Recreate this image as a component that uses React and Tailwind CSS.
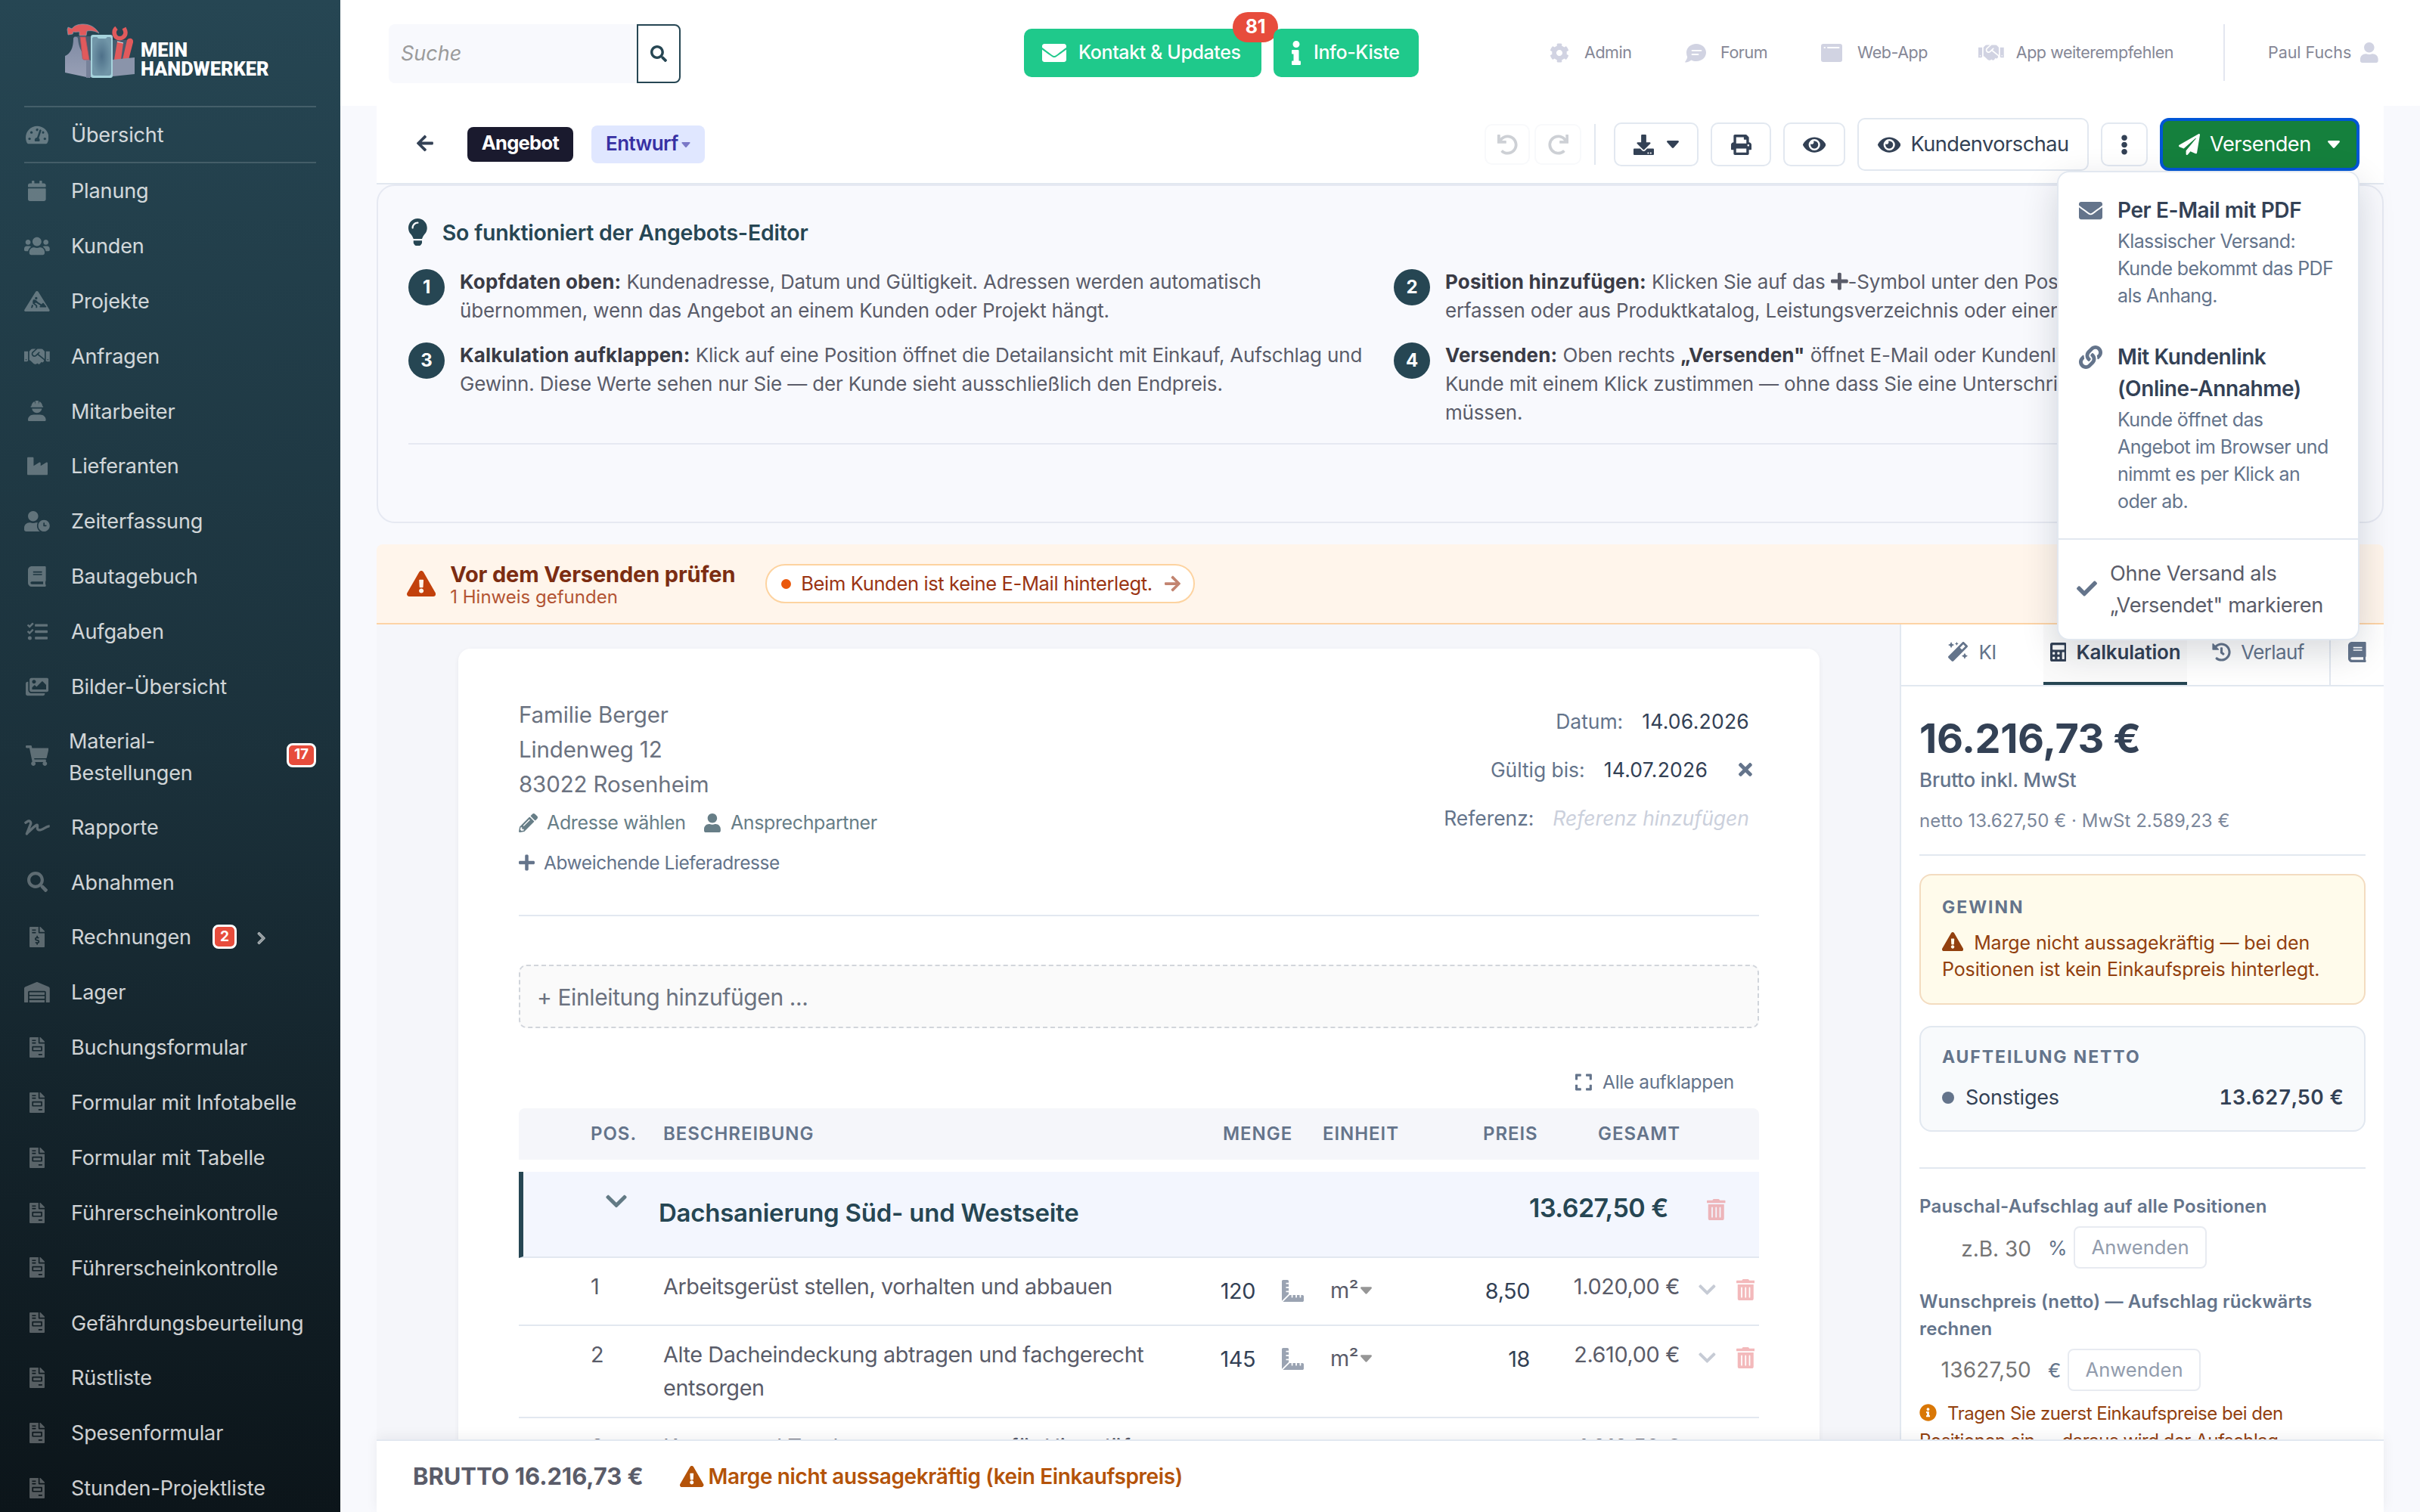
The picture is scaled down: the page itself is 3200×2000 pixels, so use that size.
import { IconContext } from "react-icons";
import {
  FaArrowLeft,
  FaArrowRight,
  FaBook,
  FaCalculator,
  FaCalendar,
  FaCheck,
  FaChevronDown,
  FaChevronRight,
  FaCog,
  FaDownload,
  FaEllipsisV,
  FaEnvelope,
  FaExclamationTriangle,
  FaExpand,
  FaEye,
  FaFileInvoice,
  FaFileInvoiceDollar,
  FaHandshake,
  FaHistory,
  FaImages,
  FaIndustry,
  FaInfo,
  FaInfoCircle,
  FaLightbulb,
  FaLink,
  FaMagic,
  FaPaperPlane,
  FaPencilAlt,
  FaPlus,
  FaPrint,
  FaRedo,
  FaRulerCombined,
  FaSearch,
  FaShoppingCart,
  FaSignature,
  FaTachometerAlt,
  FaTasks,
  FaTimes,
  FaTrashAlt,
  FaUndo,
  FaUser,
  FaUserClock,
  FaUsers,
  FaWarehouse,
} from "react-icons/fa";

// "auto" keeps each glyph's own aspect ratio, so only the height is set per icon
const iconDefaults = { size: "auto" };

/* ---------- Icons missing in Font Awesome free ---------- */

const WorkSignIcon = ({ className }) => (
  <svg viewBox="0 0 640 512" fill="currentColor" className={className}>
    <path
      fillRule="evenodd"
      d="M320 0c14 0 27 7 34 19l280 448c12 20-2 45-26 45H32c-24 0-38-25-26-45L286 19c7-12 20-19 34-19zM300 148a32 32 0 1 0 0 64 32 32 0 1 0 0-64zM214 246l24-38 60 18 52 54 82 52 30-28c8-8 20-8 26 0l66 84c6 8 0 20-10 20H400c-12 0-18-14-10-22l20-22-110-68-42 6 68 56v66h-34v-50l-78-60zm-20 90 34 26-24 62h-34z"
    />
  </svg>
);

const HelmetUserIcon = ({ className }) => (
  <svg viewBox="0 0 448 512" fill="currentColor" className={className}>
    <path d="M184 8c0-5 4-8 8-8h64c4 0 8 3 8 8v84l22-72c43 22 74 66 78 116h4c9 0 16 7 16 16s-7 16-16 16H80c-9 0-16-7-16-16s7-16 16-16h4c4-50 35-94 78-116l22 72zM100 200h248c-8 62-60 108-124 108S108 262 100 200zM0 482c0-78 64-130 142-130h164c78 0 142 52 142 130 0 17-13 30-30 30H30c-17 0-30-13-30-30z" />
  </svg>
);

const ForumIcon = ({ className }) => (
  <svg viewBox="0 0 28 26" className={className}>
    <path
      fill="currentColor"
      d="M15 1c7.200 0 13 5 13 11.500S22.200 24 15 24c-2.400 0-4.600-.5-6.500-1.500C6.500 24 4 25.500.8 25.500c-.6 0-.8-.7-.4-1.100C1.800 22.800 2.900 20.600 3.200 18.600 2.400 16.800 2 14.700 2 12.500 2 6 7.800 1 15 1z"
    />
    <path stroke="#fff" strokeWidth="1.800" strokeLinecap="round" d="M9.500 9.800h12M9.500 15h8" />
  </svg>
);

const WindowIcon = ({ className }) => (
  <svg viewBox="0 0 28 24" className={className}>
    <rect width="28" height="24" rx="3" fill="currentColor" />
    <path stroke="#fff" strokeWidth="2" strokeLinecap="round" d="M4.500 5h.5M9 5h14.500" />
  </svg>
);

const Caret = ({ className }) => (
  <svg viewBox="0 0 16 10" fill="currentColor" className={className}>
    <path d="M1.500 0h13c1.300 0 1.900 1.400 1 2.300L9 9.500c-.6.600-1.400.6-2 0L.5 2.300C-.4 1.400.2 0 1.500 0z" />
  </svg>
);

const ToolboxLogo = () => (
  <svg viewBox="0 0 92 74" className="h-[74px] w-[92px] shrink-0">
    <defs>
      <linearGradient id="box" x1="0" y1="0" x2="0" y2="1">
        <stop offset="0" stopColor="#7f8aa3" />
        <stop offset="1" stopColor="#98a0b6" />
      </linearGradient>
      <radialGradient id="screen">
        <stop offset="0" stopColor="#4e7089" />
        <stop offset="1" stopColor="#7196a8" />
      </radialGradient>
    </defs>
    <path fill="#5d6d84" d="M12 17h22v34H24zM63 22h20v26H63z" opacity=".6" />
    <path fill="url(#box)" d="M11 20c0-3 6-3 6 0 1 11 4 17 10 23l6 6v23L0 65V43c7-3 11-10 11-23z" />
    <path fill="#77829a" d="M28 49h8v22l-8 1z" />
    <path fill="#e05a5c" stroke="#8797aa" strokeWidth=".8" d="M4 5l5 2c3-4 8-6 15-6 9 0 16 4 21 12-5-3-10-4-16-3l-1 6h-9v-5c-3 0-6 1-8 0l-1 3-6 1-1-7z" />
    <path fill="#e05a5c" stroke="#b1525f" strokeWidth=".8" d="M20 18h7l5 30h-6c-3 0-3-2-3-4z" />
    <path fill="#e05a5c" d="M69 24l8 2-3 22h-9zM82 22c3-4 9-2 8 3l-6 23h-8z" />
    <path fill="#8a94aa" d="M63 48l29-3v22l-29 3z" />
    <path
      fill="none"
      stroke="#e05a5c"
      strokeWidth="5.500"
      d="M68 6c-4 3-4 10 1 13 5 2 11-1 11-7 0-2-1-4-2-6"
    />
    <path stroke="#dfe7ee" strokeWidth="1" d="M69 24l8 2" />
    <rect x="34" y="15" width="29" height="57" rx="3" fill="#a6d3dc" />
    <path fill="url(#screen)" d="M36 20c0-1 1-2 2-2h4c1 0 1 2 3 2h8c2 0 2-2 3-2h3c1 0 2 1 2 2v46c0 2-1 3-3 3H39c-2 0-3-1-3-3z" />
  </svg>
);

/* ---------- Sidebar ---------- */

const menu = [
  { label: "Planung", icon: FaCalendar },
  { label: "Kunden", icon: FaUsers },
  { label: "Projekte", icon: WorkSignIcon },
  { label: "Anfragen", icon: FaHandshake },
  { label: "Mitarbeiter", icon: HelmetUserIcon },
  { label: "Lieferanten", icon: FaIndustry },
  { label: "Zeiterfassung", icon: FaUserClock },
  { label: "Bautagebuch", icon: FaBook },
  { label: "Aufgaben", icon: FaTasks },
  { label: "Bilder-Übersicht", icon: FaImages },
  { label: "Material-Bestellungen", icon: FaShoppingCart, badge: "17", tall: true },
  { label: "Rapporte", icon: FaSignature },
  { label: "Abnahmen", icon: FaSearch },
  { label: "Rechnungen", icon: FaFileInvoiceDollar, badge: "2", arrow: true },
  { label: "Lager", icon: FaWarehouse },
  { label: "Buchungsformular", icon: FaFileInvoice },
  { label: "Formular mit Infotabelle", icon: FaFileInvoice },
  { label: "Formular mit Tabelle", icon: FaFileInvoice },
  { label: "Führerscheinkontrolle", icon: FaFileInvoice },
  { label: "Führerscheinkontrolle", icon: FaFileInvoice },
  { label: "Gefährdungsbeurteilung", icon: FaFileInvoice },
  { label: "Rüstliste", icon: FaFileInvoice },
  { label: "Spesenformular", icon: FaFileInvoice },
  { label: "Stunden-Projektliste", icon: FaFileInvoice },
];

const MenuIcon = ({ icon: Icon }) => (
  <span className="mb-[2px] flex w-[34px] shrink-0 justify-center text-white/30">
    <Icon className="h-[27px] w-auto shrink-0" />
  </span>
);

const CountBadge = ({ children }) => (
  <span className="mb-[3px] flex h-8 items-center rounded-lg border-[3px] border-white bg-[#e74c3c] px-[7px] text-[19px] font-bold text-white">
    {children}
  </span>
);

const Sidebar = () => (
  <aside className="flex w-[450px] shrink-0 flex-col bg-linear-to-b from-[#264653] via-[#1b313b] to-[#0c151a] px-8 text-[27px] tracking-[-0.130px] text-white/80">
    <div className="flex h-[140px] shrink-0 items-center pb-[4px] pl-[54px]">
      <ToolboxLogo />
      <div className="pt-[21px] pl-[8px] font-[Roboto] text-[25.400px] leading-[25px] font-black tracking-normal text-white">
        MEIN
        <br />
        HANDWERKER
      </div>
    </div>
    <div className="flex h-[76px] shrink-0 items-center gap-[28px] border-y-2 border-white/15 pt-[2px]">
      <MenuIcon icon={FaTachometerAlt} />
      Übersicht
    </div>
    {menu.map((item, i) =>
      item.tall ? (
        <div key={i} className="flex h-[113px] shrink-0 items-center gap-[25px] pb-[2px]">
          <MenuIcon icon={item.icon} />
          <span className="w-[285px] pt-[3px] leading-[42px]">
            Material-
            <br />
            Bestellungen
          </span>
          <CountBadge>{item.badge}</CountBadge>
        </div>
      ) : (
        <div key={i} className="flex h-[72.860px] shrink-0 items-center gap-[28px] pt-[2px] whitespace-nowrap">
          <MenuIcon icon={item.icon} />
          {item.label}
          {item.badge && <CountBadge>{item.badge}</CountBadge>}
          {item.arrow && (
            <FaChevronRight className="-ml-px h-[18px] w-auto stroke-white/50 stroke-[30px] text-white/50" />
          )}
        </div>
      )
    )}
  </aside>
);

/* ---------- Top bar ---------- */

const TopBar = () => (
  <header className="flex h-[140px] shrink-0 bg-white pt-8 pl-16">
    <div className="flex h-[78px] w-[386px] text-[27px]">
      <div className="flex w-[328px] items-center rounded-l-lg bg-[#f8f9fd] pl-4 text-[#9b9b9b] italic">
        Suche
      </div>
      <div className="flex w-[58px] items-center justify-center rounded-r-lg border-2 border-[#264653] text-[#264653]">
        <FaSearch className="h-[22px] w-auto" />
      </div>
    </div>

    <div className="mt-[6px] ml-[454px] flex h-16 gap-4 text-[25px] font-medium tracking-[-0.400px] text-white">
      <div className="relative flex w-[314px] items-center gap-4 rounded-[10px] bg-[#1fc98b] pl-6 whitespace-nowrap">
        <FaEnvelope className="h-8 w-auto" />
        Kontakt &amp; Updates
        <span className="absolute -top-[22px] -right-[22px] flex h-10 w-[60px] items-center justify-center rounded-full bg-[#e74c3c] text-[25px] font-bold">
          81
        </span>
      </div>
      <div className="relative flex w-[192px] items-center gap-[17px] rounded-[10px] bg-[#1fc98b] pl-6 whitespace-nowrap">
        <FaInfo className="h-8 w-auto" />
        Info-Kiste
      </div>
    </div>

    <div className="ml-[173px] flex h-[75px] text-[21.500px] tracking-[-0.450px] whitespace-nowrap text-[#858796]">
      <div className="flex w-[179px] items-center gap-[20px]">
        <FaCog className="h-[26px] w-auto text-[#d1d3e2]" />
        Admin
      </div>
      <div className="flex w-[180px] items-center gap-[19px]">
        <ForumIcon className="h-[26px] w-[28px] text-[#d1d3e2]" />
        Forum
      </div>
      <div className="flex w-[208px] items-center gap-5">
        <WindowIcon className="h-6 w-7 text-[#d1d3e2]" />
        Web-App
      </div>
      <div className="flex w-[326px] items-center gap-[16px] border-r-2 border-[#e3e6f0]">
        <FaHandshake className="h-[27px] w-auto text-[#d1d3e2]" />
        App weiterempfehlen
      </div>
      <div className="flex items-center gap-[16px] pl-[57px]">
        <span className="w-[106px] tracking-[-0.050px]">Paul Fuchs</span>
        <FaUser className="h-[27px] w-auto text-[#d1d3e2]" />
      </div>
    </div>
  </header>
);

/* ---------- Toolbar ---------- */

const SendMenu = () => (
  <div className="absolute top-[70px] right-0 z-20 h-[621px] w-[400px] rounded-2xl border-2 border-[#e2e8f0] bg-white text-[28px] shadow-[0_16px_48px_rgba(15,23,42,0.16)]">
    <div className="flex gap-[20px] pt-[29px] pl-[27px]">
      <FaEnvelope className="mt-[6px] h-[31px] w-auto shrink-0 text-[#64748b]" />
      <div>
        <div className="leading-[42px] font-semibold tracking-[-0.4px] text-[#334155]">Per E-Mail mit PDF</div>
        <div className="mt-[2px] w-[300px] text-[25px] leading-9 tracking-[-0.6px] text-[#64748b]">
          Klassischer Versand:
          <br />
          Kunde bekommt das PDF
          <br />
          als Anhang.
        </div>
      </div>
    </div>
    <div className="flex gap-[20px] pt-[42px] pl-[27px]">
      <FaLink className="mt-[6px] h-[31px] w-auto shrink-0 text-[#64748b]" />
      <div>
        <div className="leading-[42px] font-semibold tracking-[-0.4px] text-[#334155]">
          Mit Kundenlink
          <br />
          (Online-Annahme)
        </div>
        <div className="mt-[2px] w-[300px] text-[25px] leading-9 tracking-[-0.6px] text-[#64748b]">
          Kunde öffnet das
          <br />
          Angebot im Browser und
          <br />
          nimmt es per Klick an
          <br />
          oder ab.
        </div>
      </div>
    </div>
    <div className="mt-[31px] flex items-center gap-[17px] border-t-2 border-[#e2e8f0] pt-[24px] pl-[24px] text-[#5a5c69]">
      <FaCheck className="mb-[4px] h-[27px] w-auto shrink-0 text-[#64748b]" />
      <div className="text-[27.200px] leading-[42px] tracking-[-0.350px]">
        Ohne Versand als
        <br />
        „Versendet" markieren
      </div>
    </div>
  </div>
);

const Toolbar = () => (
  <div className="flex h-[104px] shrink-0 items-center border-b-2 border-[#e2e8f0] bg-white pr-8 pl-[53px] text-[27.200px] tracking-[-0.500px] text-[#334155]">
    <FaArrowLeft className="mb-[3px] h-[25px] w-auto" />
    <div className="ml-[45px] flex h-[46px] w-[140px] items-center justify-center rounded-lg bg-[#1a1a2e] pb-[3px] text-[25.500px] font-bold tracking-[-0.700px] text-white">
      Angebot
    </div>
    <div className="ml-6 flex h-[50px] w-[150px] items-center justify-center gap-1 rounded-lg bg-[#e0e7ff] pb-[3px] text-[26px] font-semibold tracking-[-0.6px] text-[#3730a3]">
      Entwurf
      <Caret className="mt-[4px] h-[7px] w-3 opacity-60" />
    </div>

    <div className="ml-auto flex items-center">
      <div className="flex h-[54px] w-[60px] items-center justify-center rounded-[10px] border-2 border-[#f8f9fb] text-[#cdd0d5]">
        <FaUndo className="h-[27px] w-auto" />
      </div>
      <div className="ml-[6px] flex h-[54px] w-[62px] items-center justify-center rounded-[10px] border-2 border-[#f8f9fb] text-[#cdd0d5]">
        <FaRedo className="h-[27px] w-auto" />
      </div>
      <div className="ml-[17px] h-[54px] w-[2px] bg-[#e2e8f0]" />
      <div className="ml-6 flex h-[58px] w-[112px] items-center justify-center gap-[17px] rounded-[10px] border-2 border-[#e2e8f0]">
        <FaDownload className="h-[27px] w-auto" />
        <Caret className="h-[10px] w-4" />
      </div>
      <div className="ml-4 flex h-[58px] w-20 items-center justify-center rounded-[10px] border-2 border-[#e2e8f0]">
        <FaPrint className="h-[27px] w-auto" />
      </div>
      <div className="ml-4 flex h-[58px] w-[82px] items-center justify-center rounded-[10px] border-2 border-[#e2e8f0]">
        <FaEye className="h-[27px] w-auto" />
      </div>
      <div className="ml-4 flex h-[70px] w-[306px] items-center gap-[13px] rounded-[10px] border-2 border-[#e2e8f0] pl-[25px]">
        <FaEye className="h-[27px] w-auto" />
        Kundenvorschau
      </div>
      <div className="ml-4 flex h-[58px] w-[62px] items-center justify-center rounded-[10px] border-2 border-[#e2e8f0]">
        <FaEllipsisV className="h-[27px] w-auto" />
      </div>
      <div className="relative ml-4">
        <div className="flex h-[70px] w-[264px] items-center rounded-[12px] border-4 border-[#0056d6] bg-[#15803d] pl-[21px] text-white">
          <FaPaperPlane className="h-7 w-auto" />
          <span className="ml-[13px] w-[134px]">Versenden</span>
          <Caret className="ml-[22px] h-[10px] w-4" />
        </div>
        <SendMenu />
      </div>
    </div>
  </div>
);

/* ---------- Help panel ---------- */

const Step = ({ nr, children }) => (
  <div className="flex gap-5">
    <span className="mt-[2px] flex size-12 shrink-0 items-center justify-center rounded-full bg-[#264653] text-[24px] font-bold text-white">
      {nr}
    </span>
    <p className="leading-[38.300px] whitespace-nowrap">{children}</p>
  </div>
);

const HelpPanel = () => (
  <section className="h-[448px] shrink-0 rounded-[24px] border-2 border-[#e6e9f2] px-10 pt-[42px] text-[26px] tracking-[-0.180px] text-[#5a5c69]">
    <div className="flex h-10 items-center gap-5 text-[28.500px] font-semibold tracking-[-0.230px] text-[#264653]">
      <FaLightbulb className="mb-[2px] h-9 w-auto" />
      So funktioniert der Angebots-Editor
    </div>
    <div className="mt-[26px] grid grid-cols-[1263px_1264px] gap-x-10 gap-y-5 [&_b]:tracking-[0.150px] [&_b]:text-[#3a3b45]">
      <Step nr="1">
        <b>Kopfdaten oben:</b> Kundenadresse, Datum und Gültigkeit. Adressen werden automatisch
        <br />
        übernommen, wenn das Angebot an einem Kunden oder Projekt hängt.
      </Step>
      <Step nr="2">
        <b>Position hinzufügen:</b> Klicken Sie auf das <FaPlus className="inline h-[26px] w-auto align-[-3px]" />
        -Symbol unter den Positionen
        <br />
        erfassen oder aus Produktkatalog, Leistungsverzeichnis oder einer
      </Step>
      <Step nr="3">
        <b>Kalkulation aufklappen:</b> Klick auf eine Position öffnet die Detailansicht mit Einkauf, Aufschlag und
        <br />
        Gewinn. Diese Werte sehen nur Sie — der Kunde sieht ausschließlich den Endpreis.
      </Step>
      <Step nr="4">
        <b>Versenden:</b> Oben rechts <b>„Versenden"</b> öffnet E-Mail oder Kundenlink
        <br />
        Kunde mit einem Klick zustimmen — ohne dass Sie eine Unterschrift
        <br />
        müssen.
      </Step>
    </div>
    <div className="mt-[21px] h-[2px] bg-[#e6e9f2]" />
  </section>
);

/* ---------- Check bar ---------- */

const CheckBar = () => (
  <div className="mt-7 flex h-[106px] shrink-0 items-center rounded-t-lg border-b-2 border-[#fdd3a5] bg-[#fff5eb] pl-10">
    <FaExclamationTriangle className="h-[34px] w-auto text-[#c2410c]" />
    <div className="ml-[19px] w-[417px] pt-[4px]">
      <div className="text-[29px] leading-[32px] font-bold tracking-[-0.150px] text-[#7c2d12]">
        Vor dem Versenden prüfen
      </div>
      <div className="text-[24px] leading-[28px] text-[#b35433]">1 Hinweis gefunden</div>
    </div>
    <div className="flex h-[52px] w-[568px] items-center rounded-full border-2 border-[#fdd3a0] bg-white pl-[19px] text-[25.600px] text-[#9a3412]">
      <span className="size-[13px] rounded-full bg-[#ea580c]" />
      <span className="ml-[13px] w-[481px] tracking-[-0.400px] whitespace-nowrap">
        Beim Kunden ist keine E-Mail hinterlegt.
      </span>
      <FaArrowRight className="h-[24px] w-auto opacity-60" />
    </div>
  </div>
);

/* ---------- Document ---------- */

const rows = [
  { pos: "1", text: ["Arbeitsgerüst stellen, vorhalten und abbauen"], qty: "120", unit: "m²", price: "8,50", total: "1.020,00 €" },
  { pos: "2", text: ["Alte Dacheindeckung abtragen und fachgerecht", "entsorgen"], qty: "145", unit: "m²", price: "18", total: "2.610,00 €" },
  { pos: "3", text: ["Konter- und Traglattung erneuern, für Hinterlüftung"], qty: "", unit: "", price: "", total: "1.812,50 €" },
];

const Row = ({ row }) => (
  <div className="flex min-h-[90px] items-start border-b-2 border-[#e2e8f0] py-4 pl-[95px] text-[28.800px] leading-[44px] tracking-[-0.400px] whitespace-nowrap text-[#5a5c69]">
    <span className="w-24">{row.pos}</span>
    <span className="w-[690px]">
      {row.text.map((line) => (
        <span key={line} className="block">
          {line}
        </span>
      ))}
    </span>
    <span className="w-[93px] pt-[6px] text-right text-[#334155]">{row.qty}</span>
    {row.qty ? (
      <FaRulerCombined className="mt-[13px] ml-[35px] h-[29px] w-auto text-[#9aa3b2]" />
    ) : (
      <span className="ml-[35px] w-[29px]" />
    )}
    <span className="ml-[35px] flex w-[100px] items-center gap-[3px] pt-[5px]">
      {row.unit}
      {row.unit && <Caret className="h-[10px] w-[15px] text-[#969696]" />}
    </span>
    <span className="w-[164px] pt-[6px] text-right text-[#334155]">{row.price}</span>
    <span className="w-[198px] text-right tracking-[-0.350px]">{row.total}</span>
    {row.qty && (
      <>
        <FaChevronDown className="mt-[13px] ml-[25px] h-[26px] w-auto text-[#c6cbd5]" />
        <FaTrashAlt className="mt-[12px] ml-[27px] h-7 w-auto text-[#f3b9bb]" />
      </>
    )}
  </div>
);

const DocumentCard = () => (
  <div className="mt-8 ml-[108px] h-[1100px] w-[1800px] shrink-0 rounded-2xl bg-white px-20 pt-16 text-[#64748b] shadow-[0_2px_6px_rgba(15,23,42,0.06)]">
    <div className="flex h-[290px] justify-between border-b-2 border-[#e2e8f0]">
      <div className="text-[29.500px] leading-[46px] tracking-[-0.130px] text-[#6b7280]">
        Familie Berger
        <br />
        Lindenweg 12
        <br />
        83022 Rosenheim
        <div className="flex h-14 items-center text-[25px] tracking-[-0.370px] whitespace-nowrap text-[#677e87]">
          <FaPencilAlt className="h-[25px] w-auto" />
          <span className="ml-[12px] w-[208px]">Adresse wählen</span>
          <FaUser className="h-[25px] w-auto" />
          <span className="ml-[13px]">Ansprechpartner</span>
        </div>
        <div className="flex h-[50px] items-center gap-[12px] text-[24.500px] tracking-[-0.430px] text-[#64748b]">
          <FaPlus className="h-6 w-auto" />
          Abweichende Lieferadresse
        </div>
      </div>
      <div className="flex flex-col items-end pr-[13px] text-[26.500px] leading-[64px] tracking-[-0.050px]">
        <div className="flex gap-[25px]">
          Datum: <span className="tracking-[0.250px] text-[#334155]">14.06.2026</span>
        </div>
        <div className="flex items-center gap-[25px]">
          Gültig bis: <span className="tracking-[0.250px] text-[#334155]">14.07.2026</span>
          <FaTimes className="-mr-[4px] ml-[16px] h-[26px] w-auto" />
        </div>
        <div className="flex gap-[25px]">
          Referenz: <span className="tracking-normal text-[#cbd0dc] italic">Referenz hinzufügen</span>
        </div>
      </div>
    </div>

    <div className="mt-16 flex h-[84px] items-center rounded-[10px] border-2 border-dashed border-[#d1d5db] bg-[#fafafa] pt-[2px] pl-[22px] text-[30px] tracking-[-0.400px] text-[#6b7280]">
      + Einleitung hinzufügen ...
    </div>

    <div className="mt-[51px] flex h-10 items-center justify-end gap-[14px] pr-[33px] text-[24.500px] tracking-[-0.350px]">
      <FaExpand className="h-[25px] w-auto" />
      Alle aufklappen
    </div>

    <div className="mt-[15px] flex h-[68px] items-center rounded-t-lg bg-[#f5f6fa] pl-[95px] text-[24px] font-semibold tracking-[0.950px]">
      <span className="w-24">POS.</span>
      <span className="w-[740px]">BESCHREIBUNG</span>
      <span className="w-[132px]">MENGE</span>
      <span className="w-[212px]">EINHEIT</span>
      <span className="w-[152px]">PREIS</span>
      <span>GESAMT</span>
    </div>

    <div className="mt-4 flex h-[114px] border-b-2 border-l-[6px] border-b-[#e2e8f0] border-l-[#264653] bg-[#f3f6fe] pl-[109px] font-semibold text-[#264653]">
      <FaChevronDown className="mt-[23px] h-[32px] w-auto opacity-70" />
      <span className="mt-[32px] ml-[42px] w-[1151px] text-[33px] leading-[44px] tracking-[-0.250px]">
        Dachsanierung Süd- und Westseite
      </span>
      <span className="mt-[26px] w-[185px] text-[34px] leading-[44px] tracking-[-0.5px] whitespace-nowrap">
        13.627,50 €
      </span>
      <FaTrashAlt className="mt-[36px] ml-[50px] h-7 w-auto text-[#edb5ba]" />
    </div>

    {rows.map((row) => (
      <Row key={row.pos} row={row} />
    ))}
  </div>
);

/* ---------- Calculation panel ---------- */

const ApplyButton = () => (
  <span className="flex h-14 w-[176px] items-center justify-center rounded-lg border-2 border-[#e8ebf1] text-[25.600px] text-[#929cad]">
    Anwenden
  </span>
);

const CalcPanel = () => (
  <aside className="w-[640px] shrink-0 border-l-2 border-[#e2e8f0] bg-white text-[#64748b]">
    <div className="flex h-[82px] border-b-2 border-[#e2e8f0] text-[26px]">
      <div className="flex w-[188px] items-center justify-center gap-[14px] pb-2">
        <FaMagic className="h-[26px] w-auto" />
        <span className="tracking-[-0.700px]">KI</span>
      </div>
      <div className="flex w-[190px] items-center justify-center gap-[13px] border-b-4 border-[#264653] bg-[#fafafa] pb-1 font-semibold tracking-[-0.2px] text-[#334155]">
        <FaCalculator className="h-[25px] w-auto" />
        Kalkulation
      </div>
      <div className="flex w-[190px] items-center justify-center gap-[13px] border-r-2 border-[#e2e8f0] pb-2 tracking-[-0.600px]">
        <FaHistory className="h-[25px] w-auto" />
        Verlauf
      </div>
      <div className="flex items-center pb-2 pl-[23px]">
        <FaBook className="h-[27px] w-auto" />
      </div>
    </div>

    <div className="px-6 pt-8">
      <div className="h-[74px] text-[54px] leading-[74px] font-bold tracking-[-0.400px] text-[#334155]">16.216,73 €</div>
      <div className="text-[26px] leading-9 font-medium tracking-[-0.2px]">Brutto inkl. MwSt</div>
      <div className="mt-[18px] text-[24px] leading-9 tracking-[0.030px] text-[#7b879b]">
        netto 13.627,50 € · MwSt 2.589,23 €
      </div>
      <div className="mt-[26px] h-[2px] bg-[#e2e8f0]" />

      <div className="mt-6 h-[173px] rounded-2xl border-2 border-[#f3dcc0] bg-[#fffbeb] px-7 pt-6">
        <div className="text-[23px] leading-9 font-bold tracking-[2px]">GEWINN</div>
        <div className="mt-3 text-[25px] leading-[35px] tracking-[-0.130px] whitespace-nowrap text-[#92400e]">
          <FaExclamationTriangle className="mr-[14px] inline h-[25px] w-auto align-[-2px]" />
          Marge nicht aussagekräftig — bei den
          <br />
          Positionen ist kein Einkaufspreis hinterlegt.
        </div>
      </div>

      <div className="mt-7 h-[140px] rounded-2xl border-2 border-[#e2e8f0] bg-[#f8fafc] px-7 pt-[21px]">
        <div className="text-[23px] leading-9 font-bold tracking-[1.900px]">AUFTEILUNG NETTO</div>
        <div className="mt-[18px] flex items-center text-[27px] leading-9 tracking-[-0.200px] text-[#334155]">
          <span className="mr-[15px] size-4 rounded-full bg-[#64748b]" />
          Sonstiges
          <span className="-mr-px ml-auto font-semibold tracking-[0.200px] tabular-nums">13.627,50 €</span>
        </div>
      </div>

      <div className="mt-[47px] h-[2px] bg-[#e2e8f0]" />
      <div className="mt-8 text-[24px] leading-9 font-semibold tracking-[0.180px]">
        Pauschal-Aufschlag auf alle Positionen
      </div>
      <div className="mt-2 flex h-14 items-center text-[26px]">
        <span className="w-[148px] pt-[3px] text-right text-[28px] text-[#757575]">z.B. 30</span>
        <span className="ml-[22px] w-[34px]">%</span>
        <ApplyButton />
      </div>
      <div className="mt-[26px] text-[24px] leading-9 font-semibold tracking-[0.130px] whitespace-nowrap">
        Wunschpreis (netto) — Aufschlag rückwärts
        <br />
        rechnen
      </div>
      <div className="mt-2 flex h-14 items-center text-[26px]">
        <span className="w-[148px] text-right text-[28px] tracking-[0.200px] text-[#757575]">13627,50</span>
        <span className="ml-[22px] w-[26px]">€</span>
        <ApplyButton />
      </div>
      <div className="mt-3 text-[24px] leading-9 tracking-[-0.480px] whitespace-nowrap text-[#92400e]">
        <FaInfoCircle className="mr-[14px] inline h-[23px] w-auto align-[-2px] text-[#d97706]" />
        Tragen Sie zuerst Einkaufspreise bei den
        <br />
        Positionen ein — daraus wird der Aufschlag
      </div>
    </div>
  </aside>
);

const FooterBar = () => (
  <footer className="relative flex h-24 shrink-0 items-center border-t-2 border-[#e2e8f0] bg-white pl-[48px] shadow-[0_-4px_16px_rgba(15,23,42,0.06)]">
    <span className="w-[353px] text-[31px] font-bold tracking-[-0.070px] whitespace-nowrap text-[#5a5c69]">
      BRUTTO 16.216,73 €
    </span>
    <FaExclamationTriangle className="h-[28px] w-auto text-[#b45309]" />
    <span className="ml-[6px] text-[28px] font-semibold tracking-[-0.380px] text-[#b45309]">
      Marge nicht aussagekräftig (kein Einkaufspreis)
    </span>
  </footer>
);

const App = () => (
  <IconContext.Provider value={iconDefaults}>
    <div className="flex h-[2000px] w-[3200px] overflow-hidden bg-[#f8f9fd] font-[Inter,sans-serif]">
      <Sidebar />
      <div className="flex min-w-0 flex-1 flex-col">
        <TopBar />
        <main className="mx-12 flex min-h-0 flex-1 flex-col">
          <Toolbar />
          <HelpPanel />
          <CheckBar />
          <div className="flex min-h-0 flex-1 overflow-hidden bg-[#f5f6fa]">
            <div className="flex flex-1 flex-col overflow-hidden">
              <DocumentCard />
            </div>
            <CalcPanel />
          </div>
          <FooterBar />
        </main>
      </div>
    </div>
  </IconContext.Provider>
);

export default App;
